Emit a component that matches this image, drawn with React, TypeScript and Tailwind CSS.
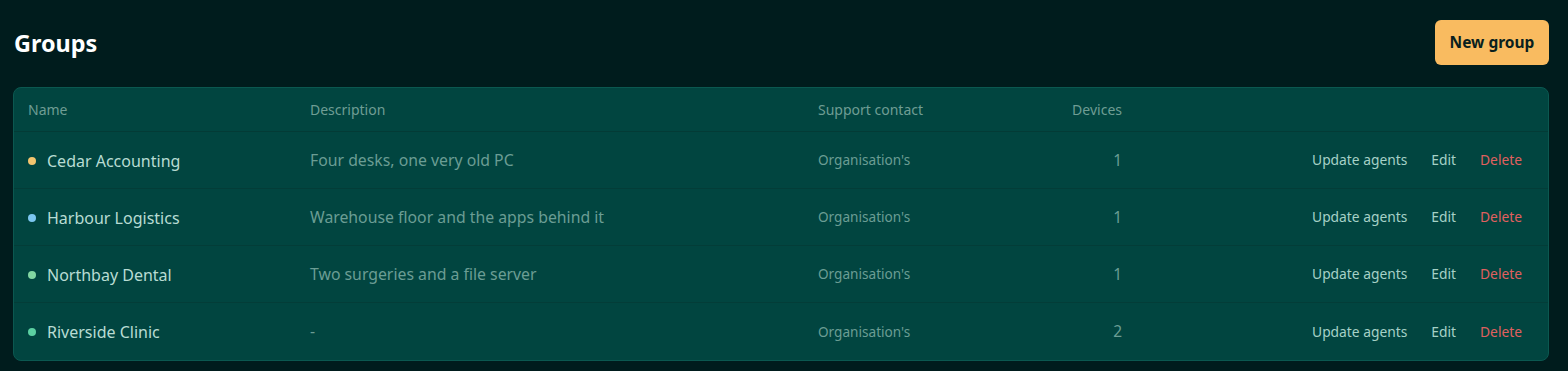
import React from "react";

const rows = [
  { name: "Cedar Accounting", dot: "bg-[#f2c46e]", desc: "Four desks, one very old PC", devices: 1 },
  { name: "Harbour Logistics", dot: "bg-[#7cc6f0]", desc: "Warehouse floor and the apps behind it", devices: 1 },
  { name: "Northbay Dental", dot: "bg-[#82d6a2]", desc: "Two surgeries and a file server", devices: 1 },
  { name: "Riverside Clinic", dot: "bg-[#5cd0a2]", desc: "-", devices: 2 },
];

export default function App() {
  return (
    <div
      className="min-h-[371px] bg-[#001c1d] pl-[13px] pr-[19px] pt-[20px] pb-[11px]"
      style={{ fontFamily: '"Noto Sans", "Open Sans", sans-serif' }}
    >
      <div className="flex items-center justify-between h-[45px]">
        <h1 className="text-[23.4px] font-bold text-white pl-[1px] pt-[3px] leading-none">Groups</h1>
        <button className="h-[45px] w-[114px] rounded-md bg-[#f9bb60] text-[15.5px] font-bold text-[#0a1f1e]">
          New group
        </button>
      </div>
      <div className="mt-[22px] rounded-lg border border-[#0b5850] bg-[#014540] overflow-hidden">
        <div className="grid grid-cols-[282px_508px_204px_100px_1fr] items-center h-[44px] pl-[14px] pr-[14px] text-[14px] text-[#6f9d94] border-b border-[#033b36]">
          <div>Name</div>
          <div>Description</div>
          <div>Support contact</div>
          <div className="text-right">Devices</div>
          <div></div>
        </div>
        {rows.map((r, i) => (
          <div
            key={r.name}
            className={`grid grid-cols-[282px_508px_204px_100px_1fr] items-center h-[57px] pl-[14px] pr-[14px] pt-[1px] ${
              i < rows.length - 1 ? "border-b border-[#033d38]" : ""
            }`}
          >
            <div className="flex items-center gap-[11px]">
              <span className={`h-2 w-2 rounded-full ${r.dot}`}></span>
              <span className="text-[16px] text-[#b8dcd3]">{r.name}</span>
            </div>
            <div className="text-[15.8px] text-[#6b9d94]">{r.desc}</div>
            <div className="text-[13.6px] text-[#6b9d94]">Organisation's</div>
            <div className="text-right text-[15.5px] text-[#6b9d94]">{r.devices}</div>
            <div className="flex justify-end text-[13.8px]">
              <button className="px-3 text-[#a6d1c7]">Update agents</button>
              <button className="px-3 text-[#a6d1c7]">Edit</button>
              <button className="px-3 text-[#e0605f]">Delete</button>
            </div>
          </div>
        ))}
      </div>
    </div>
  );
}
